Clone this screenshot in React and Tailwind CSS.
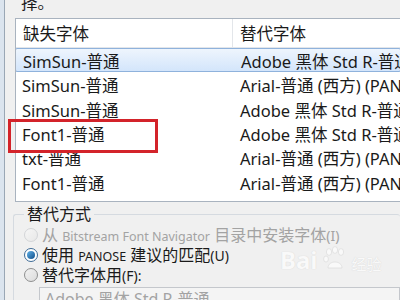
export default function App() {
  const rows = [
    { a: 'SimSun-普通', b: 'Adobe 黑体 Std R-普通', selected: true },
    { a: 'SimSun-普通', b: 'Arial-普通 (西方) (PANOSE)' },
    { a: 'SimSun-普通', b: 'Adobe 黑体 Std R-普通' },
    { a: 'Font1-普通', b: 'Adobe 黑体 Std R-普通' },
    { a: 'txt-普通', b: 'Arial-普通 (西方) (PANOSE)' },
    { a: 'Font1-普通', b: 'Arial-普通 (西方) (PANOSE)' },
  ];

  return (
    <div
      className="relative w-[400px] h-[300px] overflow-hidden flex bg-[#f0f0f0] text-[16.5px] text-[#1a1a1a]"
      style={{ fontFamily: '"Noto Sans", "Noto Sans CJK SC", sans-serif' }}
    >
      <div className="w-[5px] shrink-0 bg-[#dbe4ee] border-r border-[#9aa7b5]" />
      <div className="flex-1 min-w-0 flex flex-col pl-[10px]">
        <div className="h-[18px] shrink-0 overflow-hidden pl-[6px]">
          <div className="-mt-[9px] leading-[24px]">择。</div>
        </div>

        <div className="h-[184px] shrink-0 bg-white border border-[#a9b3bf] border-r-0 flex flex-col overflow-hidden">
          <div className="h-[29px] shrink-0 flex items-center border-b border-[#e3e6ea] whitespace-nowrap">
            <div className="w-[216px] pl-[7px] pt-[3px]">缺失字体</div>
            <div className="h-full border-l border-[#e3e6ea] pl-[7px] pt-[3px] flex items-center">替代字体</div>
          </div>
          {rows.map((r, i) => (
            <div
              key={i}
              className={
                'h-[24.4px] shrink-0 flex items-center pt-[4px] whitespace-nowrap ' +
                (r.selected
                  ? 'bg-gradient-to-b from-[#eef5fd] to-[#d3e5fb] border border-[#8fb2dc] rounded-[2px] -mx-[1px] px-[1px]'
                  : '')
              }
            >
              <div className="w-[217px] shrink-0 pl-[6px]">{r.a}</div>
              <div className="pl-[7px]">{r.b}</div>
            </div>
          ))}
        </div>

        <div className="relative shrink-0 mt-[12px] ml-[-2px] h-[120px] border border-[#d5dae0] rounded-[3px] border-r-0 border-b-0 pl-[10px] pt-[10px] text-[16px]">
          <div className="absolute -top-[12px] left-[10px] px-[3px] bg-[#f0f0f0] leading-[22px]">替代方式</div>
          <div className="flex items-center gap-[4px] h-[20px] text-[#a3a3a3] whitespace-nowrap">
            <span className="w-[14px] h-[14px] shrink-0 rounded-full border border-[#d3d5d8] bg-gradient-to-br from-[#f6f6f6] to-[#e8e8e8]" />
            <span>从 <span className="text-[12.5px]">Bitstream Font Navigator</span> 目录中安装字体<span className="text-[14px]">(I)</span></span>
          </div>
          <div className="flex items-center gap-[4px] h-[20px] whitespace-nowrap">
            <span className="w-[14px] h-[14px] shrink-0 rounded-full border border-[#3d6a95] bg-white flex items-center justify-center">
              <span className="w-[8px] h-[8px] rounded-full bg-gradient-to-br from-[#63b4ea] to-[#0d4f8a]" />
            </span>
            <span>使用 <span className="text-[12.5px]">PANOSE</span> 建议的匹配<span className="text-[14px]">(U)</span></span>
          </div>
          <div className="flex items-center gap-[4px] h-[20px] whitespace-nowrap">
            <span className="w-[14px] h-[14px] shrink-0 rounded-full border border-[#8e8f8f] bg-gradient-to-br from-[#f2f2f2] to-[#dcdcdc]" />
            <span>替代字体用<span className="text-[14px]">(F):</span></span>
          </div>
          <div className="mt-[2px] ml-[15px] h-[24px] border border-[#c4c7cc] bg-[#f4f4f4] pl-[5px] text-[#a3a3a3] whitespace-nowrap leading-[22px]">
            Adobe 黑体 Std R-普通
          </div>
        </div>
      </div>

      <div className="absolute left-[8px] top-[119px] w-[150px] h-[34px] border-[3px] border-[#d3232a]" />

      <div className="absolute left-[280px] top-[246px] flex items-end gap-[3px] text-white opacity-60 pointer-events-none">
        <span className="text-[24px] font-bold leading-none" style={{ textShadow: '0 0 1px #bbb' }}>Bai</span>
        <svg width="28" height="26" viewBox="0 0 26 26">
          <g fill="#fff" stroke="#c8c8c8" strokeWidth="0.6">
            <ellipse cx="7" cy="6" rx="2.6" ry="3.4" />
            <ellipse cx="13" cy="4" rx="2.6" ry="3.4" />
            <ellipse cx="19" cy="6" rx="2.6" ry="3.4" />
            <ellipse cx="4" cy="13" rx="2.4" ry="3" />
            <path d="M6 22 C6 14, 20 14, 20 22 Z" />
          </g>
        </svg>
        <span className="text-[15px] leading-none" style={{ textShadow: '0 0 1px #bbb' }}>经验</span>
      </div>
    </div>
  );
}
